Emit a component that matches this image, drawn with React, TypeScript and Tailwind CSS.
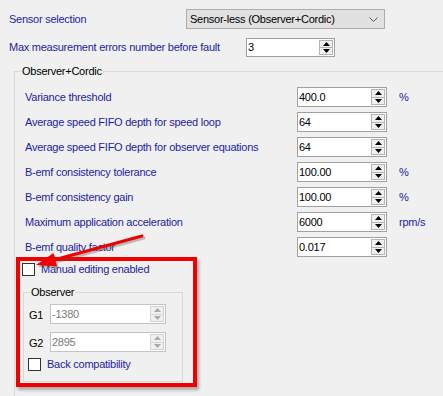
import React from "react";

const FONT = { fontFamily: '"Liberation Sans", Arial, sans-serif' };

function Spinner({ value, width, disabled }: { value: string; width: string; disabled?: boolean }) {
  const arrow = disabled ? "#a8a8a8" : "#000";
  const btnBorder = disabled ? "border-[#d4d4d4]" : "border-[#b4b4b4]";
  return (
    <div className={`flex h-[20px] ${width} border ${disabled ? "border-[#c4c4c4]" : "border-[#a0a0a0]"} bg-white`}>
      <div className={`flex-1 pl-[1px] leading-[18px] ${disabled ? "text-[#7a7a7a]" : "text-black"}`}>{value}</div>
      <div className="flex flex-col w-[15px] py-[1px] pr-[1px]">
        <div className={`flex-1 flex items-center justify-center border ${btnBorder} bg-[#f0f0f0]`}>
          <svg width="7" height="4" viewBox="0 0 7 4"><polygon points="3.5,0 7,4 0,4" fill={arrow} /></svg>
        </div>
        <div className={`flex-1 flex items-center justify-center border ${btnBorder} border-t-0 bg-[#f0f0f0]`}>
          <svg width="7" height="4" viewBox="0 0 7 4"><polygon points="0,0 7,0 3.5,4" fill={arrow} /></svg>
        </div>
      </div>
    </div>
  );
}

function Row({ label, value, unit }: { label: string; value: string; unit?: string }) {
  return (
    <div className="flex items-center h-[20px]">
      <span className="w-[272px] text-[#1c1ca6]">{label}</span>
      <Spinner value={value} width="w-[90px]" />
      {unit && <span className="ml-[12px] text-[#1c1ca6]">{unit}</span>}
    </div>
  );
}

export default function App() {
  return (
    <div
      className="relative w-[443px] h-[396px] bg-[#f0f0f0] overflow-hidden text-[11px] tracking-[-0.25px] text-black"
      style={FONT}
    >
      <div className="flex items-center h-[20px] mt-[9px] ml-[9px]">
        <span className="w-[177px] text-[#1c1ca6]">Sensor selection</span>
        <div className="flex items-center w-[199px] h-[20px] border border-[#adadad] bg-[#e1e1e1] pl-[3px] pr-[6px]">
          <span className="flex-1">Sensor-less (Observer+Cordic)</span>
          <svg width="9" height="5" viewBox="0 0 9 5">
            <polyline points="0.5,0.5 4.5,4.5 8.5,0.5" fill="none" stroke="#555" strokeWidth="1" />
          </svg>
        </div>
      </div>
      <div className="flex items-center h-[19px] mt-[9px] ml-[9px]">
        <span className="w-[237px] text-[#1c1ca6]">Max measurement errors number before fault</span>
        <div className="flex h-[19px] w-[89px] border border-[#a0a0a0] bg-white">
          <div className="flex-1 pl-[1px] leading-[17px]">3</div>
          <div className="flex flex-col w-[15px] py-[1px] pr-[1px]">
            <div className="flex-1 flex items-center justify-center border border-[#b4b4b4] bg-[#f0f0f0]">
              <svg width="7" height="4" viewBox="0 0 7 4"><polygon points="3.5,0 7,4 0,4" fill="#000" /></svg>
            </div>
            <div className="flex-1 flex items-center justify-center border border-t-0 border-[#b4b4b4] bg-[#f0f0f0]">
              <svg width="7" height="4" viewBox="0 0 7 4"><polygon points="0,0 7,0 3.5,4" fill="#000" /></svg>
            </div>
          </div>
        </div>
      </div>

      <div className="relative mt-[14px] ml-[14px] h-[400px] border-l border-t border-[#d8d8d8]">
        <span className="absolute -top-[8px] left-[6px] bg-[#f0f0f0] px-[1px] leading-[14px]">Observer+Cordic</span>
        <div className="flex flex-col gap-[5px] pt-[15px] pl-[10px]">
          <Row label="Variance threshold" value="400.0" unit="%" />
          <Row label="Average speed FIFO depth for speed loop" value="64" />
          <Row label="Average speed FIFO depth for observer equations" value="64" />
          <Row label="B-emf consistency tolerance" value="100.00" unit="%" />
          <Row label="B-emf consistency gain" value="100.00" unit="%" />
          <Row label="Maximum application acceleration" value="6000" unit="rpm/s" />
          <Row label="B-emf quality factor" value="0.017" />
        </div>

        <div className="ml-[1px] w-[181px] h-[130px] border-4 border-[#f00000] shadow-[2px_3px_3px_rgba(0,0,0,0.3)]">
          <div className="flex items-center h-[13px] mt-[2px] ml-[2px]">
            <div className="w-[13px] h-[13px] border border-[#333] bg-white" />
            <span className="ml-[6px] text-[#1c1ca6] leading-[13px]">Manual editing enabled</span>
          </div>
          <div className="relative mt-[16px] ml-[3px] w-[160px] h-[90px] border border-[#d8d8d8]">
            <span className="absolute -top-[8px] left-[6px] bg-[#f0f0f0] px-[1px] leading-[14px]">Observer</span>
            <div className="flex items-center h-[20px] mt-[11px] ml-[5px]">
              <span className="w-[21px] mt-[2px] leading-[14px]">G1</span>
              <Spinner value="-1380" width="w-[116px]" disabled />
            </div>
            <div className="flex items-center h-[20px] mt-[8px] ml-[5px]">
              <span className="w-[21px] mt-[2px] leading-[14px]">G2</span>
              <Spinner value="2895" width="w-[116px]" disabled />
            </div>
            <div className="flex items-center h-[13px] mt-[6px] ml-[4px]">
              <div className="w-[13px] h-[13px] border border-[#333] bg-white" />
              <span className="ml-[6px] text-[#1c1ca6] leading-[13px]">Back compatibility</span>
            </div>
          </div>
        </div>
      </div>

      <svg className="absolute left-0 top-0 pointer-events-none" width="443" height="396" viewBox="0 0 443 396">
        <g opacity="0.35" transform="translate(2,2)">
          <line x1="142" y1="236" x2="50" y2="261" stroke="#555" strokeWidth="3" strokeLinecap="round" />
          <polygon points="36,265 53.5,252.9 57.1,266.5" fill="#555" />
        </g>
        <line x1="142" y1="236" x2="50" y2="261" stroke="#f00000" strokeWidth="3" strokeLinecap="round" />
        <polygon points="36,265 53.5,252.9 57.1,266.5" fill="#f00000" />
      </svg>
    </div>
  );
}
